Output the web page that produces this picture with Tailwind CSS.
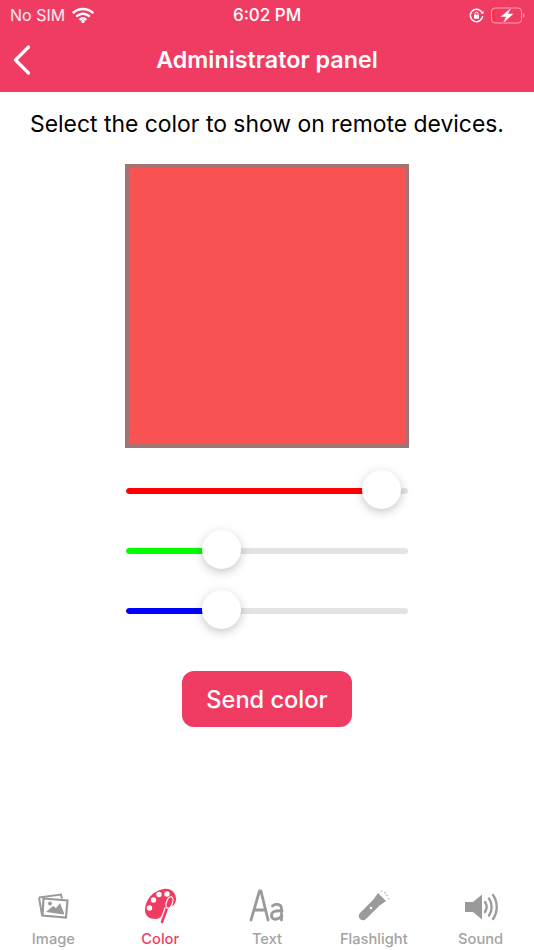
<!DOCTYPE html>
<html><head><meta charset="utf-8">
<script src="https://cdn.jsdelivr.net/npm/@tailwindcss/browser@4"></script>
</head>
<body class="bg-white">
<div class="w-[534px] h-[950px] flex flex-col overflow-hidden font-['Inter',sans-serif] bg-white">
  <header class="h-[92px] bg-[#f03c62] text-white flex flex-col shrink-0">
    <div class="h-[30px] flex items-center justify-between pl-[10px] pr-[9px] relative text-[16px] leading-[30px]">
      <div class="flex items-center gap-[7px]">
        <span class="text-white/90">No SIM</span>
        <svg width="22" height="16" viewBox="0 0 22 16" fill="none" stroke="white" stroke-width="2.4" stroke-linecap="round"><path d="M1.5 5.5C6.8 .8 15.2 .8 20.5 5.5"/><path d="M5 9c3.400-3 8.600-3 12 0"/><path d="M8.400 12.300c1.500-1.200 3.700-1.200 5.200 0"/><circle cx="11" cy="14.300" r=".6" fill="white"/></svg>
      </div>
      <span class="absolute left-[233px] top-0 font-medium text-[17px]">6:02 PM</span>
      <div class="flex items-center gap-[7px]">
        <svg width="15" height="15" viewBox="0 0 15 15" fill="none" stroke="white" stroke-width="1.500"><path d="M13 4.500A6.200 6.200 0 1 0 13.700 8"/><path d="M11.500 5.500l3 .2.200-2.700" stroke-width="0" fill="white"/><rect x="5" y="6.700" width="5" height="4" fill="white" stroke="none"/><path d="M6 6.700V5.600a1.500 1.500 0 0 1 3 0v1.100" stroke-width="1"/></svg>
        <svg width="34" height="17" viewBox="0 -0.500 34 17" fill="none"><rect x=".5" y=".5" width="30" height="15" rx="3.500" stroke="white" stroke-opacity=".5"/><rect x="2" y="3" width="1.500" height="10" fill="#ff2d2d"/><path d="M32 5.500c1 .4 1.500 1.300 1.500 2.500s-.5 2.100-1.500 2.500z" fill="white" fill-opacity=".5"/><path d="M21 -0.500 9 9.500h5.500L11.500 16.500 23 6h-5.500z" fill="white" stroke="#f03c62" stroke-width=".6"/></svg>
      </div>
    </div>
    <div class="relative flex-1 flex items-center justify-center pb-[2px]">
      <svg class="absolute left-[13px] top-[15px]" width="18" height="30" viewBox="0 0 18 30" fill="none" stroke="white" stroke-width="3.200" stroke-linecap="round" stroke-linejoin="round"><path d="M15.500 2 2.500 15l13 13"/></svg>
      <h1 class="text-[23.300px] font-semibold leading-[30px]">Administrator panel</h1>
    </div>
  </header>
  <main class="flex-1 flex flex-col items-center min-h-0">
    <p class="mt-[16px] text-[22.900px] leading-[32px] text-black whitespace-nowrap">Select the color to show on remote devices.</p>
    <div class="mt-[24px] w-[284px] h-[284px] bg-[#f95252] border-[4px] border-[#a37373] shrink-0"></div>
    <div class="mt-[22px] w-[282px] flex flex-col gap-[20px]">
      <div class="relative h-[40px] flex items-center">
        <div class="h-[6px] w-full rounded-full bg-[#e3e3e5] overflow-hidden mt-[2px]"><div class="h-full w-[240px] bg-[#ff0000] rounded-l-full"></div></div>
        <div class="absolute left-[236px] top-0 w-[39px] h-[39px] rounded-full bg-white shadow-[0_3px_8px_rgba(0,0,0,0.15),0_3px_14px_rgba(0,0,0,0.08)]"></div>
      </div>
      <div class="relative h-[40px] flex items-center">
        <div class="h-[6px] w-full rounded-full bg-[#e3e3e5] overflow-hidden mt-[2px]"><div class="h-full w-[80px] bg-[#00ff00] rounded-l-full"></div></div>
        <div class="absolute left-[76px] top-0 w-[39px] h-[39px] rounded-full bg-white shadow-[0_3px_8px_rgba(0,0,0,0.15),0_3px_14px_rgba(0,0,0,0.08)]"></div>
      </div>
      <div class="relative h-[40px] flex items-center">
        <div class="h-[6px] w-full rounded-full bg-[#e3e3e5] overflow-hidden mt-[2px]"><div class="h-full w-[80px] bg-[#0000ff] rounded-l-full"></div></div>
        <div class="absolute left-[76px] top-0 w-[39px] h-[39px] rounded-full bg-white shadow-[0_3px_8px_rgba(0,0,0,0.15),0_3px_14px_rgba(0,0,0,0.08)]"></div>
      </div>
    </div>
    <button class="mt-[41px] w-[170px] h-[56px] pt-[1px] rounded-[12px] bg-[#f03c62] text-white text-[23.600px] font-medium flex items-center justify-center">Send color</button>
  </main>
  <nav class="h-[70px] grid grid-cols-5 shrink-0 text-[14.700px] leading-[18px] font-medium text-[#a3a3a3]">
    <div class="flex flex-col items-center">
      <svg class="mt-[8px]" width="34" height="36" viewBox="0 0 34 36" fill="none"><path d="M3 9.500 25 6.500l1 4" stroke="#9a9a9a" stroke-width="2"/><path d="M3 9.500 6 27l3-.4" stroke="#9a9a9a" stroke-width="2"/><path d="M7.500 10.500 31.500 12.500 30 29.500 6.500 27.500z" fill="white" stroke="#9a9a9a" stroke-width="2.200"/><path d="M10 24l7-6 3 2 4-5 4 10-.4 1.500z" fill="#9a9a9a"/><circle cx="14" cy="15.500" r="2" fill="#9a9a9a"/></svg>
      <span class="mt-[6px]">Image</span>
    </div>
    <div class="flex flex-col items-center text-[#f03c62]">
      <svg class="mt-[8px]" width="36" height="36" viewBox="0 0 36 36" fill="none"><path d="M22 1C29 0 34 5 34 11c0 6-5 8-8 9l-4 4c-2 4-4 7-8 7C7 31 3 28 3 22 3 11 12 2 22 1z" fill="#f03c62"/><circle cx="17" cy="6.500" r="2.700" fill="white"/><circle cx="25" cy="6" r="2.700" fill="white"/><circle cx="11.500" cy="12" r="2.700" fill="white"/><circle cx="7.500" cy="20" r="2.700" fill="white"/><path d="M25 20 20 34" stroke="white" stroke-width="5"/><path d="M25 20 20 34" stroke="#f03c62" stroke-width="2.500" stroke-linecap="round"/><ellipse cx="27.500" cy="14.500" rx="3" ry="6" transform="rotate(20 27.500 14.500)" fill="#f03c62" stroke="white" stroke-width="1.200"/></svg>
      <span class="mt-[6px]">Color</span>
    </div>
    <div class="flex flex-col items-center">
      <svg class="mt-[8px]" width="36" height="36" viewBox="0 0 36 36" fill="none" stroke="#9a9a9a" stroke-linecap="round" stroke-linejoin="round"><path d="M2 32 10.500 3h1.500L19 32M5 22h11.500" stroke-width="2.800"/><path d="M23.500 18c2-2.300 8.500-2.500 9 2v12M33 23c-7-1-10.500 1-10.500 4.500S27 33.500 33 28" stroke-width="2.800"/></svg>
      <span class="mt-[6px]">Text</span>
    </div>
    <div class="flex flex-col items-center">
      <svg class="mt-[8px]" width="36" height="36" viewBox="0 0 36 36" fill="none"><path d="M7 28 19 16" stroke="#9a9a9a" stroke-width="8.500" stroke-linecap="round"/><path d="M21.800 18.800 16.200 13.200 22 5 30 13z" fill="#9a9a9a"/><circle cx="15" cy="20" r="1.300" fill="white"/><path d="M25 3.500l1-1M28 5.500l1.500-1.500M30 8l1.500-1.500M32 11l1-1" stroke="#c4c4c4" stroke-width="1.500"/></svg>
      <span class="mt-[6px]">Flashlight</span>
    </div>
    <div class="flex flex-col items-center">
      <svg class="mt-[11px]" width="36" height="33" viewBox="0 0 36 33" fill="none"><path d="M2 11h8L19 3.500v25L10 21H2z" fill="#9a9a9a"/><path d="M22 11c2 3 2 7 0 10M26 7.500c3.500 5 3.500 12 0 17M30 4c5 7 5 17 0 24" stroke="#9a9a9a" stroke-width="2.300" stroke-linecap="round"/></svg>
      <span class="mt-[6px]">Sound</span>
    </div>
  </nav>
</div>
</body></html>
